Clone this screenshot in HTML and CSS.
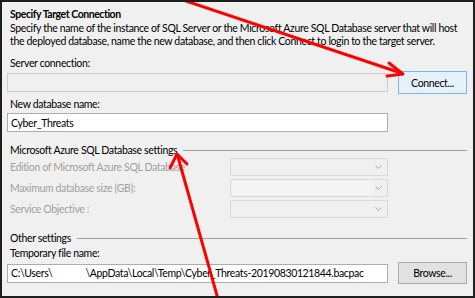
FILE: index.html
```html
<!DOCTYPE html>
<html lang="en">
<head>
    <meta charset="UTF-8">
    <title>Export Data-tier Application</title>
    <link rel="stylesheet" href="styles.css">
</head>
<body>
    <div class="frame">
        <h2 class="title">Specify Target Connection</h2>
        <p class="desc">Specify the name of the instance of SQL Server or the Microsoft Azure SQL Database server that will host<br>the deployed database, name the new database, and then click Connect to login to the target server.</p>

        <div class="label label-server">Server connection:</div>
        <div class="row row-server">
            <input type="text" class="field field-off" disabled>
            <button class="btn btn-default">Connect...</button>
        </div>

        <div class="label label-db">New database name:</div>
        <div class="row row-db">
            <input type="text" class="field" value="Cyber_Threats">
        </div>

        <div class="group group-azure">
            <span>Microsoft Azure SQL Database settings</span>
            <span class="rule"></span>
        </div>
        <div class="azure-grid">
            <div class="label label-off">Edition of Microsoft Azure SQL Database</div>
            <div class="select"><svg class="chev" width="7" height="5" viewBox="0 0 7 5"><polyline points="0.5,0.5 3.5,3.5 6.5,0.5"/></svg></div>
            <div class="label label-off">Maximum database size (GB):</div>
            <div class="select select-combo"><span class="combo-box"></span><svg class="chev" width="7" height="5" viewBox="0 0 7 5"><polyline points="0.5,0.5 3.5,3.5 6.5,0.5"/></svg></div>
            <div class="label label-off">Service Objective :</div>
            <div class="select"><svg class="chev" width="7" height="5" viewBox="0 0 7 5"><polyline points="0.5,0.5 3.5,3.5 6.5,0.5"/></svg></div>
        </div>

        <div class="group group-other">
            <span>Other settings</span>
            <span class="rule"></span>
        </div>
        <div class="label label-temp">Temporary file name:</div>
        <div class="row row-temp">
            <div class="field field-path">C:\Users\<span class="redacted"></span>\AppData\Local\Temp\Cyber_Threats-20190830121844.bacpac</div>
            <button class="btn">Browse...</button>
        </div>

        <svg class="arrows" width="475" height="298" viewBox="0 0 475 298">
            <line x1="180" y1="-1" x2="401" y2="73"/>
            <polyline points="389,63 403,74 387,76"/>
            <line x1="218" y1="299" x2="178" y2="157"/>
            <polyline points="170,168 177,154 187,164"/>
        </svg>
    </div>
</body>
</html>
```

FILE: styles.css
```css
body {
    margin: 0;
    font-family: Lato, 'Noto Sans', sans-serif;
    font-size: 10.5px;
    letter-spacing: -0.35px;
    color: #000;
}

.frame {
    position: relative;
    width: 475px;
    height: 298px;
    box-sizing: border-box;
    border: 2px solid #1e1e1e;
    background-color: #f0f0f0;
    padding: 4px 6px 0 5px;
    overflow: hidden;
}

.title {
    margin: 0;
    padding-left: 3px;
    font-size: 10.5px;
    font-weight: bold;
    letter-spacing: -0.45px;
    line-height: 16px;
}

.desc {
    margin: 0;
    padding-left: 3px;
    line-height: 13px;
    white-space: nowrap;
}

.label {
    padding-left: 3px;
    line-height: 16px;
    white-space: nowrap;
}

.label-server {
    margin-top: 7px;
}

.label-db {
    margin-top: 2px;
}

.row {
    display: flex;
    align-items: center;
    gap: 10px;
}

.row-db {
    margin-top: 1px;
}

.row-temp {
    margin-top: 1px;
}

.field {
    box-sizing: border-box;
    width: 381px;
    height: 19px;
    margin: 0;
    padding: 0 3px;
    border: 1px solid #abadb3;
    background-color: #fff;
    font-family: inherit;
    font-size: 10.5px;
    letter-spacing: -0.35px;
    line-height: 17px;
    color: #000;
    outline: none;
}

.field-off {
    border-color: #cccccc;
    background-color: #f0f0f0;
}

.field-path {
    white-space: nowrap;
    overflow: hidden;
}

.redacted {
    display: inline-block;
    width: 33px;
}

.btn {
    box-sizing: border-box;
    width: 69px;
    height: 22px;
    margin: 0;
    padding: 0;
    border: 1px solid #adadad;
    background-color: #e1e1e1;
    font-family: inherit;
    font-size: 10.5px;
    letter-spacing: -0.35px;
    color: #000;
}

.btn-default {
    height: 23px;
    border-color: #7eb4ea;
    background-color: #e5f1fb;
}

.group {
    display: flex;
    align-items: center;
    padding-left: 3px;
    line-height: 16px;
    white-space: nowrap;
}

.group .rule {
    flex: 1;
    height: 1px;
    margin-left: 6px;
    background-color: #a0a0a0;
}

.group-azure {
    margin-top: 10px;
}

.group-other {
    margin-top: 13px;
    line-height: 15px;
}

.label-temp {
    line-height: 15px;
}

.azure-grid {
    display: grid;
    grid-template-columns: 223px 158px;
    grid-auto-rows: 18px;
    row-gap: 3px;
    margin-top: 0;
}

.azure-grid .label {
    line-height: 18px;
}

.label-off {
    color: #a0a0a0;
}

.select {
    position: relative;
    box-sizing: border-box;
    border: 1px solid #d9d9d9;
    background-color: #f0f0f0;
}

.select-combo {
    display: flex;
}

.combo-box {
    width: 141px;
    margin: 1px;
    background-color: #f4f4f4;
}

.chev {
    position: absolute;
    right: 5px;
    top: 6px;
}

.chev polyline {
    fill: none;
    stroke: #a8a8a8;
    stroke-width: 1;
}

.arrows {
    position: absolute;
    left: -2px;
    top: -2px;
    pointer-events: none;
}

.arrows line,
.arrows polyline {
    fill: none;
    stroke: #ff0000;
    stroke-width: 3;
    stroke-linecap: round;
    stroke-linejoin: round;
}
```
